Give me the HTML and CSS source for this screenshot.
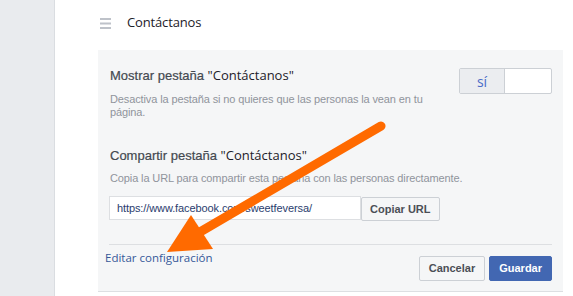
FILE: index.html
```html
<!DOCTYPE html>
<html lang="es">
<head>
<meta charset="utf-8">
<title>Contáctanos</title>
<link rel="stylesheet" href="styles.css">
</head>
<body>
<div class="page">
  <aside class="sidebar"></aside>
  <main class="main">
    <header class="header">
      <svg class="menu-icon" width="11" height="11" viewBox="0 0 11 11" aria-hidden="true">
        <rect x="0" y="0" width="11" height="2" fill="#bec2c9"/>
        <rect x="0" y="4.5" width="11" height="2" fill="#bec2c9"/>
        <rect x="0" y="9" width="11" height="2" fill="#bec2c9"/>
      </svg>
      <h1 class="title">Contáctanos</h1>
    </header>
    <section class="panel">
      <div class="setting setting-toggle">
        <div class="setting-text">
          <h2 class="setting-title"><span class="t-label">Mostrar pestaña </span><span class="t-name">"Contáctanos"</span></h2>
          <p class="setting-desc">Desactiva la pestaña si no quieres que las personas la vean en tu página.</p>
        </div>
        <div class="toggle">
          <span class="toggle-on">sí</span>
          <span class="toggle-off"></span>
        </div>
      </div>
      <div class="setting setting-share">
        <h2 class="setting-title"><span class="t-label">Compartir pestaña </span><span class="t-name">"Contáctanos"</span></h2>
        <p class="setting-desc">Copia la URL para compartir esta pestaña con las personas directamente.</p>
        <div class="url-row">
          <div class="url-input">https://www.facebook.com/sweetfeversa/</div>
          <button class="btn btn-copy" type="button">Copiar URL</button>
        </div>
      </div>
      <div class="panel-footer">
        <a class="edit-link" href="#">Editar configuración</a>
        <div class="actions">
          <button class="btn" type="button">Cancelar</button>
          <button class="btn btn-primary" type="button">Guardar</button>
        </div>
      </div>
    </section>
  </main>
  <svg class="arrow-overlay" width="573" height="296" viewBox="0 0 573 296" aria-hidden="true">
    <line x1="381" y1="126" x2="200" y2="232" stroke="#ff6a00" stroke-width="9" stroke-linecap="round"/>
    <polygon points="191,215 213,249 167,252" fill="#ff6a00"/>
  </svg>
</div>
</body>
</html>
```

FILE: styles.css
```css
* {
  box-sizing: border-box;
}

html, body {
  margin: 0;
  padding: 0;
  background: #ffffff;
}

.page {
  position: relative;
  width: 573px;
  height: 296px;
  overflow: hidden;
  display: flex;
  background: #ffffff;
}

.sidebar {
  width: 55px;
  flex: none;
  background: #e9ebee;
  border-right: 1px solid #dadde1;
}

.main {
  flex: 1;
  padding: 0 10px 0 43px;
}

.header {
  height: 50px;
  padding: 13px 0 0 2px;
  display: flex;
  align-items: flex-start;
}

.menu-icon {
  display: block;
  margin-top: 4.5px;
  flex: none;
}

.title {
  margin: 0 0 0 16px;
  font-family: "Open Sans", sans-serif;
  font-size: 13px;
  font-weight: normal;
  line-height: 18px;
  letter-spacing: -0.15px;
  color: #1d2129;
}

.panel {
  background: #f5f6f7;
  border-bottom: 1px solid #dddfe2;
  padding: 0 11px 10px 11px;
}

.setting-toggle {
  padding-top: 16px;
  display: flex;
  justify-content: space-between;
  align-items: flex-start;
}

.setting-text {
  width: 330px;
}

.setting-title {
  margin: 0;
  font-family: "Liberation Sans", Arial, sans-serif;
  font-size: 13px;
  font-weight: normal;
  line-height: 18px;
  padding-left: 1px;
}

.t-label {
  color: #444950;
  -webkit-text-stroke: 0.2px #444950;
}

.t-name {
  font-family: "Open Sans", sans-serif;
  color: #1d2129;
}

.setting-desc {
  margin: 8px 0 0 0;
  padding-left: 1px;
  font-family: "Liberation Sans", Arial, sans-serif;
  font-size: 11px;
  line-height: 13px;
  letter-spacing: -0.12px;
  color: #90949c;
}

.toggle {
  margin-top: 2px;
  width: 93px;
  height: 26px;
  display: flex;
  border: 1px solid #ccd0d5;
  border-radius: 2px;
  background: #ffffff;
}

.toggle-on {
  width: 45px;
  background: #ebedf0;
  border-right: 1px solid #ccd0d5;
  display: flex;
  align-items: center;
  justify-content: center;
  font-family: "Open Sans", sans-serif;
  font-size: 14px;
  color: #4a6cc8;
}

.toggle-off {
  flex: 1;
}

.setting-share {
  margin-top: 27px;
}

.setting-share .setting-desc {
  margin-top: 7px;
}

.url-row {
  margin-top: 11px;
  display: flex;
  align-items: flex-start;
}

.url-input {
  width: 252px;
  height: 24px;
  padding: 0 7px;
  border: 1px solid #dddfe2;
  background: #ffffff;
  font-family: "Liberation Sans", Arial, sans-serif;
  font-size: 11px;
  line-height: 22px;
  letter-spacing: -0.1px;
  color: #2a3d6e;
  white-space: nowrap;
  overflow: hidden;
}

.btn {
  height: 25px;
  padding: 0 9px;
  border: 1px solid #ccd0d5;
  border-radius: 2px;
  background: #f5f6f7;
  font-family: "Liberation Sans", Arial, sans-serif;
  font-size: 11px;
  font-weight: bold;
  line-height: 23px;
  color: #4b4f56;
  cursor: pointer;
}

.btn-copy {
  height: 24px;
  margin-top: 1px;
  padding: 0 8px;
  line-height: 22px;
}

.btn-primary {
  background: #4267b2;
  border-color: #4267b2;
  color: #ffffff;
}

.panel-footer {
  margin-top: 23px;
  border-top: 1px solid #dddfe2;
  display: flex;
  justify-content: space-between;
  align-items: flex-start;
}

.edit-link {
  margin: 5px 0 0 -4px;
  font-family: "Open Sans", sans-serif;
  font-size: 11.5px;
  line-height: 16px;
  color: #365899;
  text-decoration: none;
}

.actions {
  margin-top: 11px;
  display: flex;
  gap: 4px;
}

.arrow-overlay {
  position: absolute;
  left: 0;
  top: 0;
  pointer-events: none;
}
```
